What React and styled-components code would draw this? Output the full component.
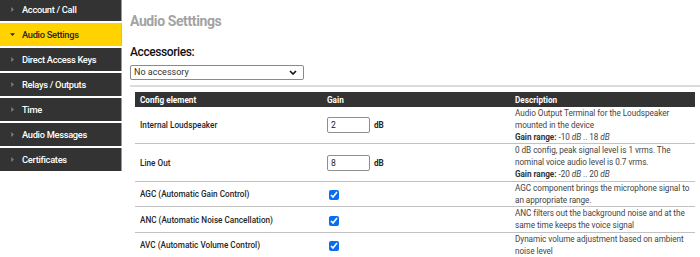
import React from "react";
import styled, { createGlobalStyle } from "styled-components";

const GlobalStyle = createGlobalStyle`
  html, body { margin: 0; padding: 0; background: #fff; }
  body { font-family: Roboto, "Liberation Sans", Arial, sans-serif; color: #333; }
  * { box-sizing: border-box; }
`;

const Page = styled.div`
  display: flex;
  align-items: flex-start;
  width: 700px;
  height: 257px;
  overflow: hidden;
`;

const Sidebar = styled.nav`
  width: 122px;
  flex: none;
  margin-top: -2px;
  display: flex;
  flex-direction: column;
  gap: 2px;
`;

const NavItem = styled.div`
  height: 23px;
  display: flex;
  align-items: center;
  gap: 7px;
  padding-left: 10px;
  background: ${(p) => (p.$active ? "#ffd200" : "#333333")};
  color: ${(p) => (p.$active ? "#262626" : "#ffffff")};
  border-right: 1px solid ${(p) => (p.$active ? "#e0c040" : "#9a9a9a")};
  font-size: 9.3px;
  font-weight: 500;
  letter-spacing: -0.3px;
  white-space: nowrap;
`;

const Arrow = styled.svg`
  width: 5px;
  height: 5px;
  flex: none;
`;

const Main = styled.main`
  flex: 1;
  margin-left: 8px;
  padding-right: 3px;
  display: flex;
  flex-direction: column;
`;

const Title = styled.h1`
  margin: 13px 0 0;
  font-size: 14px;
  line-height: 17px;
  font-weight: 700;
  letter-spacing: -0.4px;
  color: #a3a3a3;
`;

const Subtitle = styled.h2`
  margin: 15px 0 0;
  font-size: 12px;
  line-height: 14px;
  font-weight: 500;
  letter-spacing: -0.4px;
  color: #111;
`;

const SelectWrap = styled.div`
  position: relative;
  width: 174px;
  height: 15px;
  margin-top: 6px;
`;

const Select = styled.select`
  appearance: none;
  display: block;
  width: 100%;
  height: 15px;
  margin: 0;
  padding: 0 0 0 3px;
  border: 1px solid #8a8a8a;
  border-radius: 2px;
  background: #fff;
  font-family: inherit;
  font-size: 9px;
  line-height: 13px;
  color: #333;
  outline: none;
`;

const Chevron = styled.svg`
  position: absolute;
  right: 7px;
  top: 5px;
  width: 8px;
  height: 5px;
  pointer-events: none;
`;

const Rule = styled.hr`
  margin: 5px 0 0;
  border: none;
  border-top: 2px solid #dcdcdc;
  height: 0;
`;

const Table = styled.table`
  margin: 5px 5px 0;
  width: 560px;
  border-collapse: collapse;
  table-layout: fixed;
  font-size: 8.2px;
`;

const HeadCell = styled.th`
  background: #333;
  color: #fff;
  font-weight: 700;
  text-align: left;
  height: 15px;
  padding: 0 4px 0 ${(p) => (p.$first ? "5px" : "4px")};
  width: ${(p) => p.$w || "auto"};
`;

const Row = styled.tr`
  border-bottom: 1px solid #c2c2c2;
`;

const LabelCell = styled.td`
  padding: 0 4px 0 5px;
  font-weight: 500;
  color: #262626;
  vertical-align: middle;
`;

const GainCell = styled.td`
  padding: 0 4px;
  vertical-align: middle;
`;

const DescCell = styled.td`
  padding: 1px 0 0 4px;
  line-height: 11.8px;
  color: #444;
  vertical-align: top;
  white-space: nowrap;
  letter-spacing: -0.05px;
`;

const GainWrap = styled.div`
  display: flex;
  align-items: center;
  gap: 4px;
`;

const NumberInput = styled.input`
  width: 43px;
  height: 16px;
  margin: 0;
  padding: 0 0 0 3px;
  border: 1px solid #8f8f8f;
  border-radius: 2px;
  font-family: inherit;
  font-size: 8.6px;
  color: #222;
`;

const Unit = styled.span`
  font-weight: 700;
  color: #262626;
`;

const Check = styled.input`
  width: 10px;
  height: 10px;
  margin: 2px 0 0 2px;
  accent-color: #0a6cf0;
  display: block;
`;

const Strong = styled.b`
  font-weight: 700;
  color: #333;
`;

const navItems = [
  "Account / Call",
  "Audio Settings",
  "Direct Access Keys",
  "Relays / Outputs",
  "Time",
  "Audio Messages",
  "Certificates",
];

const rows = [
  {
    label: "Internal Loudspeaker",
    gain: "2",
    desc: ["Audio Output Terminal for the Loudspeaker", "mounted in the device"],
    range: ["-10", "18"],
  },
  {
    label: "Line Out",
    gain: "8",
    desc: ["0 dB config, peak signal level is 1 vrms. The", "nominal voice audio level is 0.7 vrms."],
    range: ["-20", "20"],
  },
  {
    label: "AGC (Automatic Gain Control)",
    check: true,
    desc: ["AGC component brings the microphone signal to", "an appropriate range."],
  },
  {
    label: "ANC (Automatic Noise Cancellation)",
    check: true,
    desc: ["ANC filters out the background noise and at the", "same time keeps the voice signal"],
  },
  {
    label: "AVC (Automatic Volume Control)",
    check: true,
    desc: ["Dynamic volume adjustment based on ambient", "noise level"],
  },
];

export default function App() {
  return (
    <>
      <GlobalStyle />
      <Page>
        <Sidebar>
          {navItems.map((name) => {
            const active = name === "Audio Settings";
            return (
              <NavItem key={name} $active={active}>
                {active ? (
                  <Arrow viewBox="0 0 5 5">
                    <path d="M0 1.2 L5 1.2 L2.5 4 Z" fill="#2a2a2a" />
                  </Arrow>
                ) : (
                  <Arrow viewBox="0 0 5 5">
                    <path d="M1.2 0 L4 2.5 L1.2 5 Z" fill="#7a7a7a" />
                  </Arrow>
                )}
                <span>{name}</span>
              </NavItem>
            );
          })}
        </Sidebar>
        <Main>
          <Title>Audio Setttings</Title>
          <Subtitle>Accessories:</Subtitle>
          <SelectWrap>
            <Select defaultValue="none">
              <option value="none">No accessory</option>
            </Select>
            <Chevron viewBox="0 0 8 5">
              <path d="M1 1 L4 4 L7 1" fill="none" stroke="#111" strokeWidth="1.6" />
            </Chevron>
          </SelectWrap>
          <Rule />
          <Table>
            <thead>
              <tr>
                <HeadCell $first $w="188px">Config element</HeadCell>
                <HeadCell $w="188px">Gain</HeadCell>
                <HeadCell>Description</HeadCell>
              </tr>
            </thead>
            <tbody>
              {rows.map((r) => (
                <Row key={r.label}>
                  <LabelCell>{r.label}</LabelCell>
                  <GainCell>
                    {r.check ? (
                      <Check type="checkbox" defaultChecked />
                    ) : (
                      <GainWrap>
                        <NumberInput type="text" defaultValue={r.gain} />
                        <Unit>dB</Unit>
                      </GainWrap>
                    )}
                  </GainCell>
                  <DescCell>
                    {r.desc[0]}
                    <br />
                    {r.desc[1]}
                    {r.range && (
                      <>
                        <br />
                        <Strong>Gain range:</Strong> {r.range[0]} <i>dB</i> .. {r.range[1]} <i>dB</i>
                      </>
                    )}
                  </DescCell>
                </Row>
              ))}
            </tbody>
          </Table>
        </Main>
      </Page>
    </>
  );
}
